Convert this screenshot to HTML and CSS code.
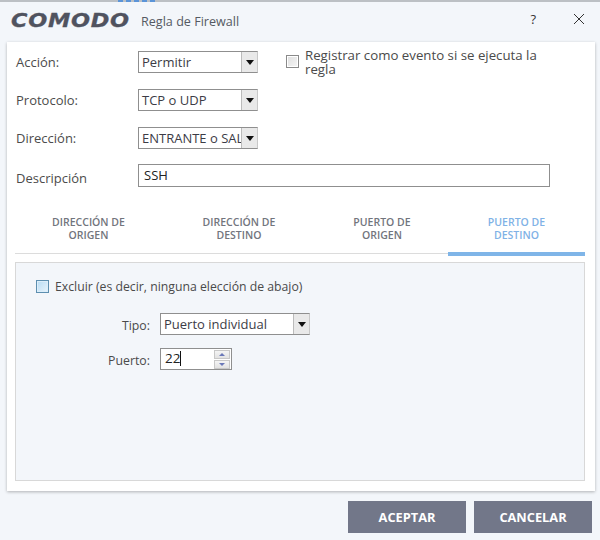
FILE: index.html
```html
<!DOCTYPE html>
<html lang="es">
<head>
<meta charset="utf-8">
<title>Regla de Firewall</title>
<link rel="stylesheet" href="styles.css">
</head>
<body>
<div class="strip"><span class="strip-blue"></span></div>
<header class="head">
  <span class="brand"><span class="logo">COMODO</span></span>
  <span class="title">Regla de Firewall</span>
  <span class="help">?</span>
  <svg class="close" width="12" height="12" viewBox="0 0 12 12"><path d="M1 1l10 10M11 1L1 11" stroke="#333" stroke-width="1" fill="none"/></svg>
</header>
<main class="card">
  <div class="row r1">
    <span class="lab">Acción:</span>
    <div class="sel"><span class="val">Permitir</span><span class="arr"><i></i></span></div>
    <span class="cb"></span>
    <span class="reg">Registrar como evento si se ejecuta la regla</span>
  </div>
  <div class="row r2">
    <span class="lab">Protocolo:</span>
    <div class="sel"><span class="val">TCP o UDP</span><span class="arr"><i></i></span></div>
  </div>
  <div class="row r2">
    <span class="lab">Dirección:</span>
    <div class="sel"><span class="val">ENTRANTE o SALIENTE</span><span class="arr"><i></i></span></div>
  </div>
  <div class="row r3">
    <span class="lab">Descripción</span>
    <div class="desc">SSH</div>
  </div>
  <nav class="tabs">
    <div class="tab">DIRECCIÓN DE<br>ORIGEN</div>
    <div class="tab">DIRECCIÓN DE<br>DESTINO</div>
    <div class="tab">PUERTO DE<br>ORIGEN</div>
    <div class="tab on">PUERTO DE<br>DESTINO</div>
  </nav>
  <section class="panel">
    <div class="ex"><span class="cb blue"></span><span>Excluir (es decir, ninguna elección de abajo)</span></div>
    <div class="prow p1">
      <span class="plab">Tipo:</span>
      <div class="sel wide"><span class="val">Puerto individual</span><span class="arr"><i></i></span></div>
    </div>
    <div class="prow p2">
      <span class="plab">Puerto:</span>
      <div class="spin">
        <span class="num">22<b class="caret"></b></span>
        <span class="btns">
          <span class="sb"><i class="up"></i></span>
          <span class="sb"><i class="dn"></i></span>
        </span>
      </div>
    </div>
  </section>
</main>
<footer class="foot">
  <div class="btn">ACEPTAR</div>
  <div class="btn">CANCELAR</div>
</footer>
</body>
</html>
```

FILE: styles.css
```css
* { box-sizing: border-box; }
html, body { margin: 0; padding: 0; }
body {
  width: 600px; height: 540px; overflow: hidden;
  background: #f3f6fa;
  font-family: "Open Sans", "Noto Sans", sans-serif;
  font-size: 13px;
  color: #444;
}
.strip { height: 2px; background: #bcc0c4; padding-left: 118px; display: flex; }
.strip-blue { width: 38px; height: 2px; background: repeating-linear-gradient(90deg, #5b94d8 0 5px, #bcc0c4 5px 8px); }
.head { height: 40px; display: flex; align-items: center; position: relative; padding-left: 11px; }
.brand { width: 130px; flex: none; }
.logo {
  display: inline-block;
  font-family: "DejaVu Sans", sans-serif; font-weight: 700; font-style: italic;
  font-size: 19px; letter-spacing: 0.6px; color: #50535f; line-height: 22px;
  -webkit-text-stroke: 0.3px #50535f;
  transform: scaleX(1.18); transform-origin: left center;
  position: relative; top: -2px;
}
.title { font-size: 12.6px; color: #555a63; position: relative; top: -1px; }
.help { margin-left: auto; margin-right: 37px; font-size: 13px; color: #333; position: relative; top: -3px; }
.close { margin-right: 15px; position: relative; top: -3px; }
.card {
  margin: 0 5px 0 7px; height: 449px; background: #fff;
  box-shadow: 0 1px 3px rgba(0,0,0,.28);
  padding: 9px 10px 0 8px;
}
.row { display: flex; align-items: center; }
.r1 { height: 22px; }
.r2 { height: 22px; margin-top: 16px; }
.r3 { height: 23px; margin-top: 15px; }
.lab { width: 123px; color: #4c4c4c; font-size: 13px; padding-left: 1px; }
.r3 .lab { position: relative; top: 2px; }
.sel {
  width: 120px; height: 22px; display: flex; background: #fff;
  border: 1px solid #8f8f8f; border-right: 1px solid #c8c8c8;
}
.val { flex: 1; min-width: 0; overflow: hidden; white-space: nowrap; padding-left: 3px; line-height: 20px; color: #3c3c46; font-size: 13px; }
.arr { width: 16px; flex: none; background: #e9e9e9; border-left: 1px solid #bbb; display: flex; align-items: center; justify-content: center; }
.arr i { width: 0; height: 0; border-left: 4px solid transparent; border-right: 4px solid transparent; border-top: 5px solid #111; }
.cb {
  width: 13px; height: 13px; flex: none; border: 1px solid #8a8a8a;
  background: linear-gradient(135deg, #dedede, #f6f6f6); box-shadow: inset 0 0 0 1px #fff;
  margin-left: 28px; margin-top: -1px;
}
.reg { width: 250px; margin-left: 6px; font-size: 13.25px; line-height: 14px; color: #4a4a4a; }
.desc {
  width: 412px; height: 23px; border: 1px solid #8f8f8f; padding-left: 5px;
  line-height: 21px; color: #222; font-size: 13px;
}
.tabs {
  display: grid; grid-template-columns: 147px 154px 132px 137px;
  margin-top: 26px; height: 41px; border-bottom: 1px solid #dcdcdc;
}
.tab {
  text-align: center; font-size: 10.5px; font-weight: 600; line-height: 13px; color: #72757d;
  padding-top: 3px;
}
.tab.on { color: #7fb2e6; border-bottom: 4px solid #7fb5e8; height: 43px; }
.panel {
  margin-top: 8px; width: 570px; height: 219px;
  background: #f3f6fa; border: 1px solid #d8d8d8;
}
.ex { display: flex; align-items: center; gap: 6px; padding: 15px 0 0 20px; height: 31px; font-size: 12.25px; color: #4a4a4a; }
.cb.blue { margin: 0; border: 1px solid #5d8fb0; background: linear-gradient(135deg, #b8dcf4, #e8f4fc); box-shadow: inset 0 0 0 1px #dceefa; }
.prow { display: flex; align-items: center; }
.p1 { margin-top: 19px; }
.p2 { margin-top: 13px; }
.plab { width: 134px; text-align: right; font-size: 12.3px; color: #4a4a4a; margin-right: 10px; position: relative; top: 1px; }
.p1 .val { line-height: 21px; }
.sel.wide { width: 150px; }
.spin { width: 72px; height: 22px; background: #fff; border: 1px solid #8f8f8f; display: flex; justify-content: space-between; }
.num { padding-left: 4px; line-height: 19px; font-size: 13.5px; color: #222; }
.caret { display: inline-block; width: 1px; height: 15px; background: #111; vertical-align: -3px; }
.btns { width: 16px; margin-right: 1px; padding-top: 1px; display: flex; flex-direction: column; gap: 1px; }
.sb { height: 9px; background: linear-gradient(#f4f4f4, #e2e2e2); border: 1px solid #c8c8c8; display: flex; align-items: center; justify-content: center; }
.up { width: 0; height: 0; border-left: 3px solid transparent; border-right: 3px solid transparent; border-bottom: 3px solid #6a78b8; }
.dn { width: 0; height: 0; border-left: 3px solid transparent; border-right: 3px solid transparent; border-top: 3px solid #6a78b8; }
.foot { display: flex; justify-content: flex-end; gap: 8px; padding: 10px 8px 0 0; }
.btn {
  width: 118px; height: 32px; background: #727789; color: #fff; text-align: center;
  font-weight: 700; font-size: 12.8px; line-height: 32px;
}
```
